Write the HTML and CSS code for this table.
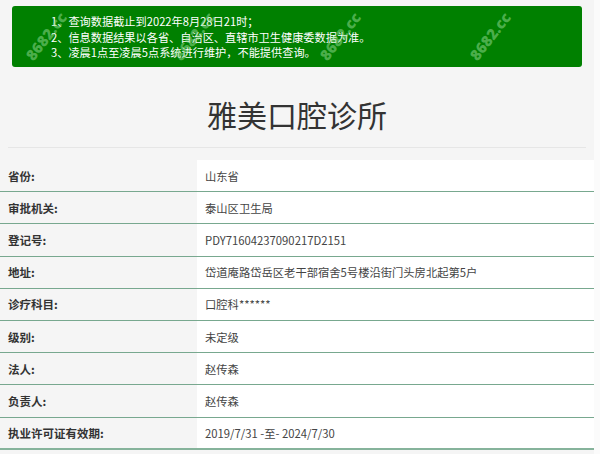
FILE: index.html
```html
<!DOCTYPE html>
<html lang="zh-CN">
<head>
<meta charset="utf-8">
<title>雅美口腔诊所</title>
<link rel="stylesheet" href="styles.css">
</head>
<body>
<div class="page">
  <div class="alert">
    <ol class="notes">
      <li>1、查询数据截止到2022年8月28日21时；</li>
      <li>2、信息数据结果以各省、自治区、直辖市卫生健康委数据为准。</li>
      <li>3、凌晨1点至凌晨5点系统进行维护，不能提供查询。</li>
    </ol>
    <span class="wm wm1" aria-hidden="true">8682.cc</span>
    <span class="wm wm2" aria-hidden="true">8682.cc</span>
    <span class="wm wm3" aria-hidden="true">8682.cc</span>
    <span class="wm wm4" aria-hidden="true">8682.cc</span>
  </div>
  <h1 class="title">雅美口腔诊所</h1>
  <div class="rule"></div>
  <div class="info">
    <div class="row"><div class="label">省份:</div><div class="value">山东省</div></div>
    <div class="row"><div class="label">审批机关:</div><div class="value">泰山区卫生局</div></div>
    <div class="row"><div class="label">登记号:</div><div class="value">PDY71604237090217D2151</div></div>
    <div class="row"><div class="label">地址:</div><div class="value">岱道庵路岱岳区老干部宿舍5号楼沿街门头房北起第5户</div></div>
    <div class="row"><div class="label">诊疗科目:</div><div class="value">口腔科******</div></div>
    <div class="row"><div class="label">级别:</div><div class="value">未定级</div></div>
    <div class="row"><div class="label">法人:</div><div class="value">赵传森</div></div>
    <div class="row"><div class="label">负责人:</div><div class="value">赵传森</div></div>
    <div class="row last"><div class="label">执业许可证有效期:</div><div class="value">2019/7/31 -至- 2024/7/30</div></div>
  </div>
</div>
</body>
</html>
```
FILE: styles.css
```css
html, body {
  margin: 0;
  padding: 0;
  background: #fbfbfb;
}
body {
  font-family: "Noto Sans CJK SC", "Open Sans", sans-serif;
  color: #333;
}
.page {
  width: 594px;
  height: 454px;
  overflow: hidden;
  background: #f5f5f5;
  padding-top: 6px;
  box-sizing: border-box;
}
.alert {
  position: relative;
  overflow: hidden;
  margin: 0 12px 0 12px;
  height: 61px;
  background: #008000;
  border-radius: 3px;
  box-sizing: border-box;
  padding: 8px 0 0 39px;
}
.notes {
  position: relative;
  z-index: 1;
  list-style: none;
  margin: 0;
  padding: 0;
  color: #fff;
  font-size: 11.2px;
  line-height: 15.5px;
}
.wm {
  position: absolute;
  z-index: 2;
  top: 20px;
  line-height: 20px;
  color: rgba(150, 220, 150, 0.5);
  font-family: "Open Sans", sans-serif;
  font-weight: 800;
  font-size: 15px;
  transform: rotate(-52deg);
  transform-origin: center;
  white-space: nowrap;
  pointer-events: none;
}
.wm1 { left: 6px; }
.wm2 { left: 154px; }
.wm3 { left: 300px; }
.wm4 { left: 450px; }
.title {
  margin: 0;
  height: 80px;
  box-sizing: border-box;
  padding-top: 27px;
  text-align: center;
  font-size: 30px;
  font-weight: 400;
  line-height: 40px;
  color: #333;
}
.rule {
  margin: 0 8px 0 8px;
  border-top: 1px solid #e6e6e6;
  height: 12px;
}
.info {
  display: flex;
  flex-direction: column;
}
.row {
  display: flex;
  height: 32.2px;
  box-sizing: border-box;
  border-bottom: 1px solid #78a88f;
}
.row.last {
  border-bottom: 2px solid #86b39b;
}
.label {
  width: 197px;
  box-sizing: border-box;
  flex: none;
  padding-left: 8px;
  display: flex;
  align-items: center;
  font-size: 11.5px;
  font-weight: 700;
  color: #333;
  background: #f5f5f5;
}
.value {
  flex: 1;
  padding-left: 8px;
  display: flex;
  align-items: center;
  font-size: 11.3px;
  background: #fff;
  color: #444;
}
```
